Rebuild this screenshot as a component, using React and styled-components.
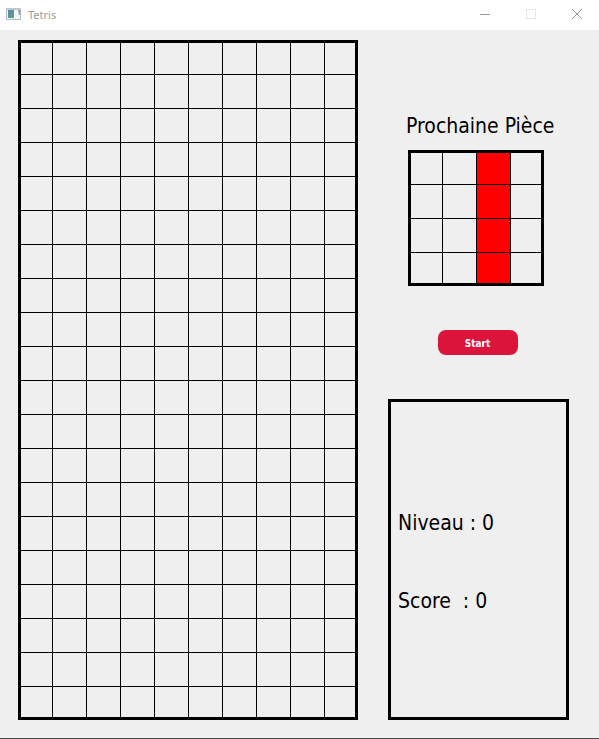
import React from "react";
import styled, { createGlobalStyle } from "styled-components";

const GlobalStyle = createGlobalStyle`
  *, *::before, *::after { box-sizing: border-box; }
  body { margin: 0; background: #efefef; }
`;

const Window = styled.div`
  display: flex;
  flex-direction: column;
  min-height: 100vh;
  background: #efefef;
  border-bottom: 1px solid #484848;
  color: #000;
  font-family: "DejaVu Sans Condensed", "DejaVu Sans", sans-serif;
`;

const TitleBar = styled.header`
  display: flex;
  align-items: center;
  height: 30px;
  padding-left: 6px;
  background: #fff;
`;

const AppIcon = styled.svg`
  flex: none;
  width: 16px;
  height: 14px;
`;

const Title = styled.h1`
  flex: 1;
  margin: 0 0 0 6px;
  color: #999;
  font: 400 11px/16px "Noto Sans", "Open Sans", sans-serif;
`;

const WindowButton = styled.button`
  display: grid;
  place-items: center;
  width: 46px;
  height: 30px;
  padding: 0 0 2px 2px;
  border: 0;
  background: transparent;
  color: ${({ $faded }) => ($faded ? "#e6e6e6" : "#999")};
`;

const Content = styled.main`
  display: grid;
  flex: 1;
  grid-template-columns: minmax(0, 340fr) minmax(0, 181fr);
  gap: 30px;
  padding: 10px 30px 18px 18px;
`;

const Grid = styled.div`
  display: grid;
  grid-template-columns: 32fr repeat(${({ $columns }) => $columns - 2}, 34fr) 30fr;
  grid-template-rows: 32fr repeat(${({ $rows }) => $rows - 2}, 34fr) 30fr;
  aspect-ratio: ${({ $columns, $rows }) => `${$columns} / ${$rows}`};
  border: 3px solid #000;
`;

const Board = styled(Grid)`
  align-self: start;
`;

const Preview = styled(Grid)`
  width: 75%;
  margin: 8px 0 0 20px;
`;

const Cell = styled.div`
  background: ${({ $filled }) => ($filled ? "#f00" : "transparent")};
  border: 0 solid #000;
  border-right-width: ${({ $lastColumn }) => ($lastColumn ? 0 : "1px")};
  border-bottom-width: ${({ $lastRow }) => ($lastRow ? 0 : "1px")};
`;

const Sidebar = styled.aside`
  display: flex;
  flex-direction: column;
  padding-top: 70px;
`;

const PreviewTitle = styled.h2`
  margin: 0 0 0 18px;
  font-size: 21px;
  font-weight: 400;
  line-height: 32px;
  white-space: nowrap;
`;

const StartButton = styled.button`
  align-self: center;
  width: 80px;
  height: 25px;
  margin: 44px 2px 44px 0;
  padding: 2px 0 0;
  border: 0;
  border-radius: 8px;
  background: #dc143c;
  color: #fff;
  font: 700 10px "DejaVu Sans Condensed", "DejaVu Sans", sans-serif;
`;

const Stats = styled.section`
  display: flex;
  flex: 1;
  flex-direction: column;
  justify-content: center;
  gap: 46px;
  border: 3px solid #000;
  padding: 6px 7px 0;
`;

const Stat = styled.p`
  margin: 0;
  font-size: 21px;
  line-height: 32px;
  white-space: pre;
`;

function CellGrid({ as: Frame, columns, rows, filledColumn, label }) {
  return (
    <Frame $columns={columns} $rows={rows} role="img" aria-label={label}>
      {Array.from({ length: columns * rows }, (_, i) => (
        <Cell
          key={i}
          $filled={i % columns === filledColumn}
          $lastColumn={i % columns === columns - 1}
          $lastRow={i >= columns * (rows - 1)}
        />
      ))}
    </Frame>
  );
}

export default function App() {
  return (
    <>
      <GlobalStyle />
      <Window>
        <TitleBar>
          <AppIcon viewBox="0 0 16 14" aria-hidden="true">
            <defs>
              <linearGradient id="pane" x1="0" y1="0" x2="1" y2="1">
                <stop offset="0" stopColor="#5f80b0" />
                <stop offset="1" stopColor="#5fa888" />
              </linearGradient>
            </defs>
            <rect x="0.5" y="0.5" width="14" height="11" fill="#f4f5f7" stroke="#b4b9c3" />
            <rect x="0" y="0" width="15" height="2" fill="#c0c5ce" />
            <rect x="2" y="2" width="6" height="8" fill="url(#pane)" />
            <path d="M12 2H14V7H13Z" fill="#76a5a2" />
          </AppIcon>
          <Title>Tetris</Title>
          <WindowButton aria-label="Minimize">
            <svg width="10" height="10" viewBox="0 0 10 10" stroke="currentColor">
              <path d="M0 5.5H10" />
            </svg>
          </WindowButton>
          <WindowButton aria-label="Maximize" $faded disabled>
            <svg width="10" height="10" viewBox="0 0 10 10" fill="none" stroke="currentColor">
              <rect x="0.5" y="0.5" width="9" height="9" />
            </svg>
          </WindowButton>
          <WindowButton aria-label="Close">
            <svg width="10" height="10" viewBox="0 0 10 10" stroke="currentColor">
              <path d="M0 0L10 10M10 0L0 10" />
            </svg>
          </WindowButton>
        </TitleBar>
        <Content>
          <CellGrid as={Board} columns={10} rows={20} label="Plateau de jeu" />
          <Sidebar>
            <PreviewTitle>Prochaine Pièce</PreviewTitle>
            <CellGrid as={Preview} columns={4} rows={4} filledColumn={2} label="Prochaine pièce" />
            <StartButton type="button">Start</StartButton>
            <Stats>
              <Stat>Niveau : 0</Stat>
              <Stat>{"Score  : 0"}</Stat>
            </Stats>
          </Sidebar>
        </Content>
      </Window>
    </>
  );
}
